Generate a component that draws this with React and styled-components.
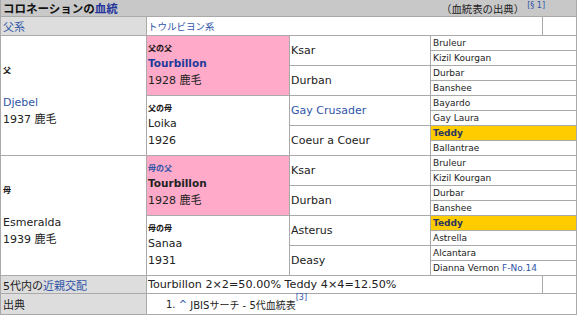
import React from "react";
import styled, { createGlobalStyle } from "styled-components";

const GlobalStyle = createGlobalStyle`
  body {
    margin: 0;
    background: #fff;
    font-family: "DejaVu Sans", "Noto Sans CJK JP", sans-serif;
    color: #222;
  }
`;

const LINK = "#2f55a8";

// 外枠
const Table = styled.div`
  width: 577px;
  box-sizing: border-box;
  border: 1px solid #aaa;
  border-top: none;
  background: #aaa;
  display: flex;
  flex-direction: column;
  gap: 1px;
`;

const TitleRow = styled.div`
  height: 16px;
  background: #c8c8c8;
  display: flex;
  align-items: center;
  justify-content: space-between;
  padding: 0 31px 0 2px;
`;

const Title = styled.div`
  font-size: 11.5px;
  font-weight: bold;
  color: #111;
  span { color: #223399; }
`;

const SourceNote = styled.div`
  font-size: 10.4px;
  color: #222;
  display: flex;
  align-items: flex-start;
  white-space: nowrap;
`;

const Sup = styled.span`
  font-size: 8px;
  line-height: 10px;
  color: ${LINK};
  align-self: flex-start;
  margin-left: ${(p) => p.$gap || 0}px;
  position: relative;
  top: ${(p) => p.$top || 0}px;
  white-space: pre;
`;

const InfoRow = styled.div`
  display: grid;
  grid-template-columns: ${(p) => p.$cols};
  gap: 1px;
  height: ${(p) => p.$h}px;
`;

const LabelCell = styled.div`
  background: #ddd;
  display: flex;
  align-items: center;
  padding-left: 2px;
  font-size: 11px;
  color: ${(p) => (p.$link ? LINK : "#222")};
`;

const ValueCell = styled.div`
  background: #fff;
  display: flex;
  align-items: center;
  padding-left: ${(p) => p.$pad || 1}px;
  font-size: ${(p) => p.$size || 11}px;
  color: ${(p) => (p.$link ? LINK : "#222")};
  white-space: nowrap;
`;

const Link = styled.span`
  color: ${LINK};
`;

const Pedigree = styled.div`
  display: grid;
  grid-template-columns: 145px 142px 140px 1fr;
  grid-template-rows: repeat(16, 14px);
  gap: 1px;
`;

const tones = { pink: "#ffaac8", yellow: "#ffcc00", white: "#fff" };

const Cell = styled.div`
  grid-column: ${(p) => p.$col};
  grid-row: ${(p) => p.$row} / span ${(p) => p.$span};
  background: ${(p) => tones[p.$tone || "white"]};
  display: flex;
  flex-direction: column;
  justify-content: center;
  padding-left: ${(p) => p.$pad}px;
  white-space: nowrap;
  overflow: hidden;
`;

const SmallLabel = styled.div`
  font-size: 8px;
  font-weight: bold;
  line-height: 13px;
  color: ${(p) => (p.$link ? LINK : "#111")};
`;

const Name = styled.div`
  font-size: ${(p) => (p.$bold ? 10.5 : 11)}px;
  font-weight: ${(p) => (p.$bold ? "bold" : "normal")};
  line-height: 17px;
  color: ${(p) => (p.$link ? (p.$bold ? "#1d3a9a" : LINK) : "#222")};
`;

const Spacer = styled.div`
  height: 17px;
`;

const Gen3Name = styled.div`
  font-size: 11px;
  color: ${(p) => (p.$link ? LINK : "#222")};
`;

const Gen4Name = styled.div`
  font-size: 9px;
  line-height: 14px;
  font-weight: ${(p) => (p.$hl ? 600 : "normal")};
  color: ${(p) => (p.$hl ? "#2a3560" : "#222")};
`;

const RefList = styled.div`
  padding-left: 18px;
  font-size: 10px;
  color: #222;
  white-space: nowrap;
  display: flex;
  align-items: center;
`;

const gen1 = [
  { label: "父", name: "Djebel", link: true, info: "1937 鹿毛" },
  { label: "母", name: "Esmeralda", info: "1939 鹿毛" },
];

const gen2 = [
  { label: "父の父", name: "Tourbillon", link: true, bold: true, info: "1928 鹿毛", tone: "pink" },
  { label: "父の母", name: "Loika", info: "1926" },
  { label: "母の父", labelLink: true, name: "Tourbillon", bold: true, info: "1928 鹿毛", tone: "pink" },
  { label: "母の母", name: "Sanaa", info: "1931" },
];

const gen3 = [
  { name: "Ksar" },
  { name: "Durban" },
  { name: "Gay Crusader", link: true },
  { name: "Coeur a Coeur" },
  { name: "Ksar" },
  { name: "Durban" },
  { name: "Asterus" },
  { name: "Deasy" },
];

const gen4 = [
  { name: "Bruleur" },
  { name: "Kizil Kourgan" },
  { name: "Durbar" },
  { name: "Banshee" },
  { name: "Bayardo" },
  { name: "Gay Laura" },
  { name: "Teddy", hl: true },
  { name: "Ballantrae" },
  { name: "Bruleur" },
  { name: "Kizil Kourgan" },
  { name: "Durbar" },
  { name: "Banshee" },
  { name: "Teddy", hl: true },
  { name: "Astrella" },
  { name: "Alcantara" },
  { name: "Dianna Vernon", family: "F-No.14" },
];

function App() {
  return (
    <>
      <GlobalStyle />
      <Table>
        <TitleRow>
          <Title>
            コロネーションの<span>血統</span>
          </Title>
          <SourceNote>
            （血統表の出典）<Sup $gap={3} $top={0}>[§ 1]</Sup>
          </SourceNote>
        </TitleRow>

        <InfoRow $cols="145px 1fr 33px" $h={18}>
          <LabelCell $link>父系</LabelCell>
          <ValueCell $link $size={9.5}>トウルビヨン系</ValueCell>
          <ValueCell />
        </InfoRow>

        <Pedigree>
          {gen1.map((h, i) => (
            <Cell key={"g1" + i} $col={1} $row={i * 8 + 1} $span={8} $pad={2}>
              <SmallLabel>{h.label}</SmallLabel>
              <Spacer />
              <Name $link={h.link}>{h.name}</Name>
              <Name>{h.info}</Name>
            </Cell>
          ))}
          {gen2.map((h, i) => (
            <Cell key={"g2" + i} $col={2} $row={i * 4 + 1} $span={4} $pad={1} $tone={h.tone}>
              <SmallLabel $link={h.labelLink}>{h.label}</SmallLabel>
              <Name $link={h.link} $bold={h.bold}>{h.name}</Name>
              <Name>{h.info}</Name>
            </Cell>
          ))}
          {gen3.map((h, i) => (
            <Cell key={"g3" + i} $col={3} $row={i * 2 + 1} $span={2} $pad={1}>
              <Gen3Name $link={h.link}>{h.name}</Gen3Name>
            </Cell>
          ))}
          {gen4.map((h, i) => (
            <Cell key={"g4" + i} $col={4} $row={i + 1} $span={1} $pad={2} $tone={h.hl ? "yellow" : "white"}>
              <Gen4Name $hl={h.hl}>
                {h.name}
                {h.family && <Link> {h.family}</Link>}
              </Gen4Name>
            </Cell>
          ))}
        </Pedigree>

        <InfoRow $cols="145px 1fr 33px" $h={17}>
          <LabelCell>
            5代内の<Link>近親交配</Link>
          </LabelCell>
          <ValueCell $size={11.2}>Tourbillon 2×2=50.00% Teddy 4×4=12.50%</ValueCell>
          <ValueCell />
        </InfoRow>

        <InfoRow $cols="145px 1fr" $h={20}>
          <LabelCell>出典</LabelCell>
          <ValueCell $pad={0}>
            <RefList>
              1.&nbsp;<Link>^</Link>&nbsp;JBISサーチ - 5代血統表<Sup $top={-4}>[3]</Sup>
            </RefList>
          </ValueCell>
        </InfoRow>
      </Table>
    </>
  );
}

export default App;
